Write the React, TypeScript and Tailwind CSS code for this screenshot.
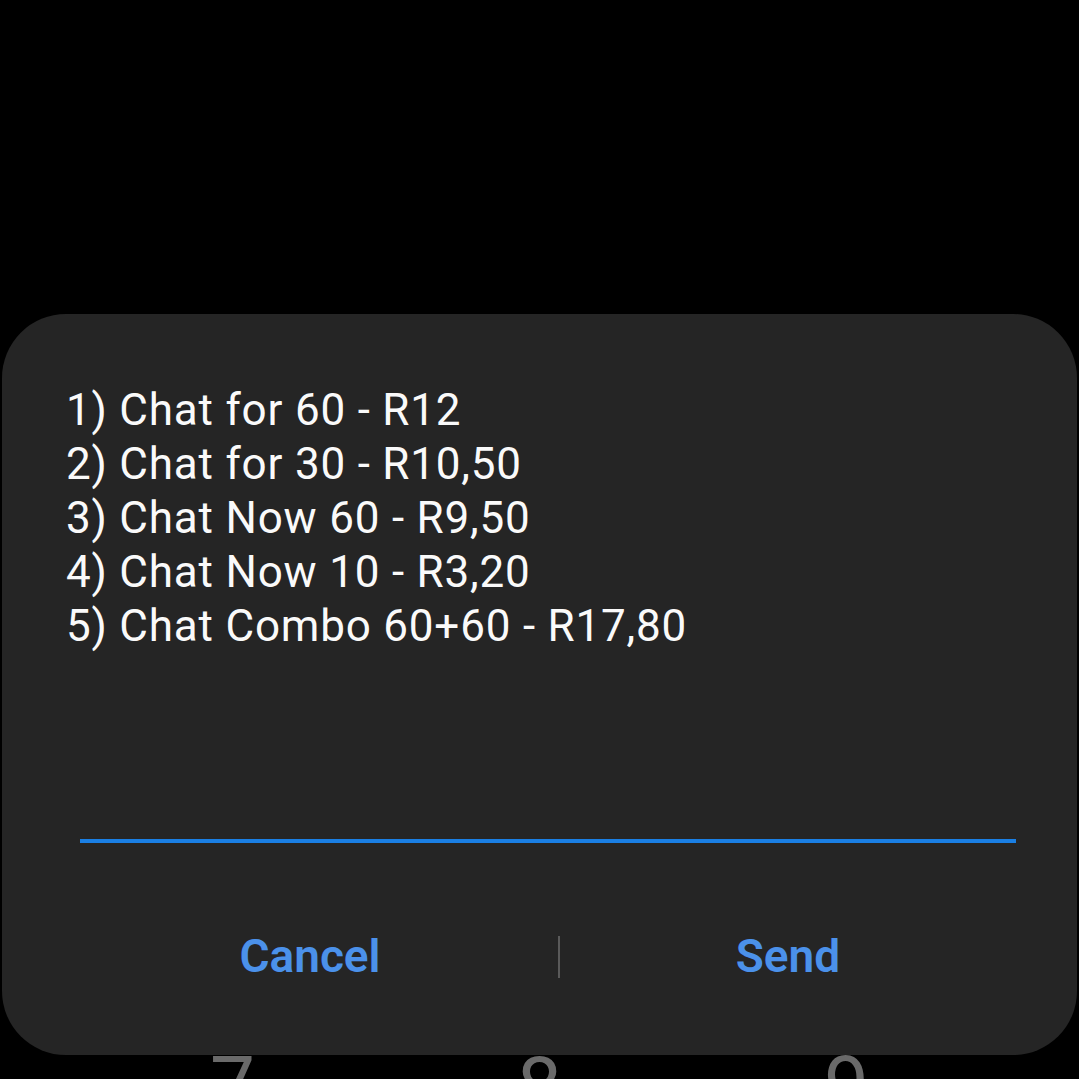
const options = [
  '1) Chat for 60 - R12',
  '2) Chat for 30 - R10,50',
  '3) Chat Now 60 - R9,50',
  '4) Chat Now 10 - R3,20',
  '5) Chat Combo 60+60 - R17,80',
];

export default function App() {
  return (
    <div className="w-[1079px] h-[1079px] bg-black flex flex-col overflow-hidden font-['Roboto',sans-serif]">
      <div className="relative z-10 mt-[314px] mx-[2px] h-[741px] bg-[#252525] rounded-[64px] flex flex-col">
        <div className="pt-[69px] pl-[64px] text-[44px] leading-[54px] tracking-[0.8px] text-[#fafafa]">
          {options.map((o) => (
            <div key={o}>{o}</div>
          ))}
        </div>
        <div className="mt-[186px] ml-[78px] mr-[61px] h-[4px] bg-[#1a7fe4]" />
        <div className="mt-[79px] ml-[78px] flex items-center">
          <button className="w-[460px] text-center text-[46px] font-semibold text-[#4b91ea]">Cancel</button>
          <div className="ml-[18px] w-[2px] h-[42px] bg-[#5a5a5a]" />
          <button className="w-[456px] text-center text-[46px] font-semibold text-[#4b91ea]">Send</button>
        </div>
      </div>
      <div className="h-[24px] overflow-hidden pl-[79px] flex">
        {['7', '8', '9'].map((d) => (
          <div key={d} className="w-[307px] text-center text-[80px] leading-none -mt-[9px] text-[#6a6a6a]">
            {d}
          </div>
        ))}
      </div>
    </div>
  );
}
